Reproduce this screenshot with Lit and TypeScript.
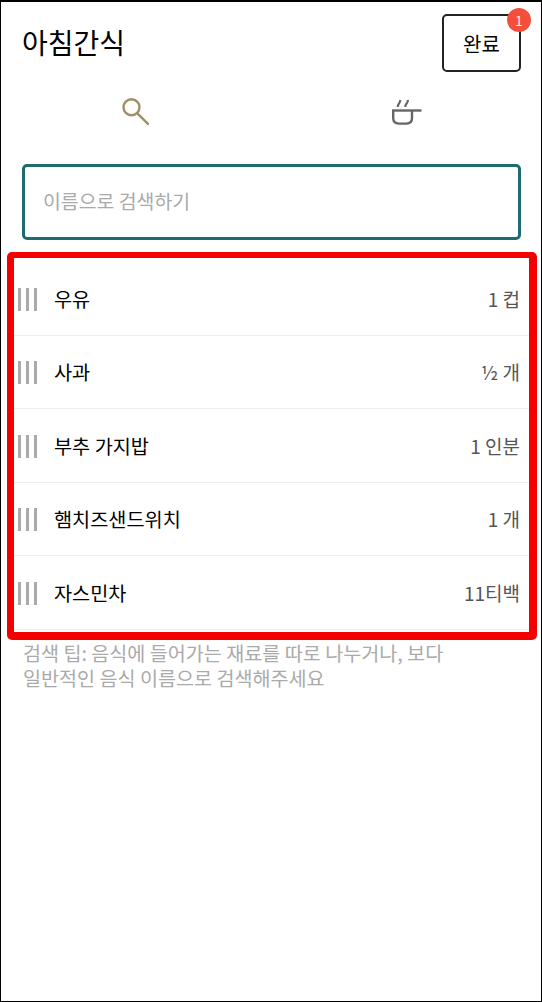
import { LitElement, html, css, svg } from 'lit';
import { customElement } from 'lit/decorators.js';

const items = [
  { name: '우유', amount: '1 컵' },
  { name: '사과', amount: '½ 개' },
  { name: '부추 가지밥', amount: '1 인분' },
  { name: '햄치즈샌드위치', amount: '1 개' },
  { name: '자스민차', amount: '11티백' },
];

const searchIcon = svg`<svg width="27" height="27" viewBox="0 0 27 27" fill="none" stroke="#a08f66">
  <circle cx="9.500" cy="9.300" r="8" stroke-width="2.400"/>
  <path d="M15.300 15.300 L26 25.800" stroke-width="2.400" stroke-linecap="round"/>
</svg>`;

const potIcon = svg`<svg width="31" height="27" viewBox="0 0 31 27" fill="none" stroke="#666" stroke-width="2.400">
  <path d="M2.200 12.500 V20 Q2.200 25.600 7.800 25.600 H15.500 Q21 25.600 21 20 V12.500" />
  <path d="M1 12.500 H30.500" />
  <path d="M6.800 9 Q6.800 7 8 5.500 Q9.200 4 9.300 2" stroke-width="2.200"/>
  <path d="M14.300 9 Q14.300 7 15.600 5.500 Q16.900 4 17 2" stroke-width="2.200"/>
</svg>`;

@customElement('app-root')
export class AppRoot extends LitElement {
  static styles = css`
    :host {
      display: block;
      width: 542px;
      height: 1002px;
      box-sizing: border-box;
      border: 1px solid #000;
      border-top-width: 2px;
      background: #fff;
      font-family: 'Noto Sans CJK KR', 'Noto Sans', sans-serif;
      color: #000;
      overflow: hidden;
    }
    .header {
      display: flex;
      justify-content: space-between;
      align-items: center;
      padding: 12px 20px 0 21px;
    }
    .title {
      font-size: 28px;
      line-height: 54px;
      padding-bottom: 2px;
      font-weight: 400;
    }
    .done {
      position: relative;
      box-sizing: border-box;
      width: 79px;
      height: 58px;
      border: 2px solid #222;
      border-radius: 5px;
      display: flex;
      align-items: center;
      justify-content: center;
      font-size: 20px;
    }
    .badge {
      position: absolute;
      top: -8px;
      right: -12px;
      width: 24px;
      height: 24px;
      border-radius: 50%;
      background: #f44f3c;
      color: #fde8e0;
      font-size: 14px;
      line-height: 24px;
      text-align: center;
    }
    .tabs {
      display: grid;
      grid-template-columns: 1fr 1fr;
      height: 44px;
      margin-top: 17px;
    }
    .tab {
      display: flex;
      align-items: center;
      justify-content: center;
    }
    .tab.search { margin-left: -1px; }
    .search-box {
      box-sizing: border-box;
      margin: 31px 20px 0 21px;
      height: 76px;
      border: 3px solid #1f6b70;
      border-radius: 5px;
      padding: 0 0 3px 18px;
      display: flex;
      align-items: center;
      font-size: 19.400px;
      color: #aaa;
    }
    .list {
      box-sizing: border-box;
      margin: 12px 4px 0 6px;
      height: 388px;
      border: solid #f40000;
      border-width: 6px 8px 8px 7px;
      border-radius: 5px;
      padding-top: 4px;
    }
    .row {
      box-sizing: border-box;
      height: 73.500px;
      display: flex;
      align-items: center;
      padding: 0 9px 0 4px;
      border-bottom: 1px solid #eee;
    }
    .grip {
      display: flex;
      gap: 5px;
      width: 36px;
      flex: none;
      padding-top: 2px;
    }
    .grip span {
      width: 3px;
      height: 23px;
      background: #aaa;
    }
    .name {
      flex: 1;
      font-size: 19.700px;
    }
    .amount {
      font-size: 19px;
      color: #555;
    }
    .tip {
      margin: 0 0 0 22px;
      font-size: 19.600px;
      line-height: 25px;
      color: #aaa;
    }
  `;

  render() {
    return html`
      <div class="header">
        <div class="title">아침간식</div>
        <div class="done">완료<span class="badge">1</span></div>
      </div>
      <div class="tabs">
        <div class="tab search">${searchIcon}</div>
        <div class="tab pot">${potIcon}</div>
      </div>
      <div class="search-box">이름으로 검색하기</div>
      <div class="list">
        ${items.map(
          (item) => html`
            <div class="row">
              <div class="grip"><span></span><span></span><span></span></div>
              <div class="name">${item.name}</div>
              <div class="amount">${item.amount}</div>
            </div>
          `
        )}
      </div>
      <div class="tip">
        검색 팁: 음식에 들어가는 재료를 따로 나누거나, 보다<br />일반적인 음식 이름으로 검색해주세요
      </div>
    `;
  }
}
